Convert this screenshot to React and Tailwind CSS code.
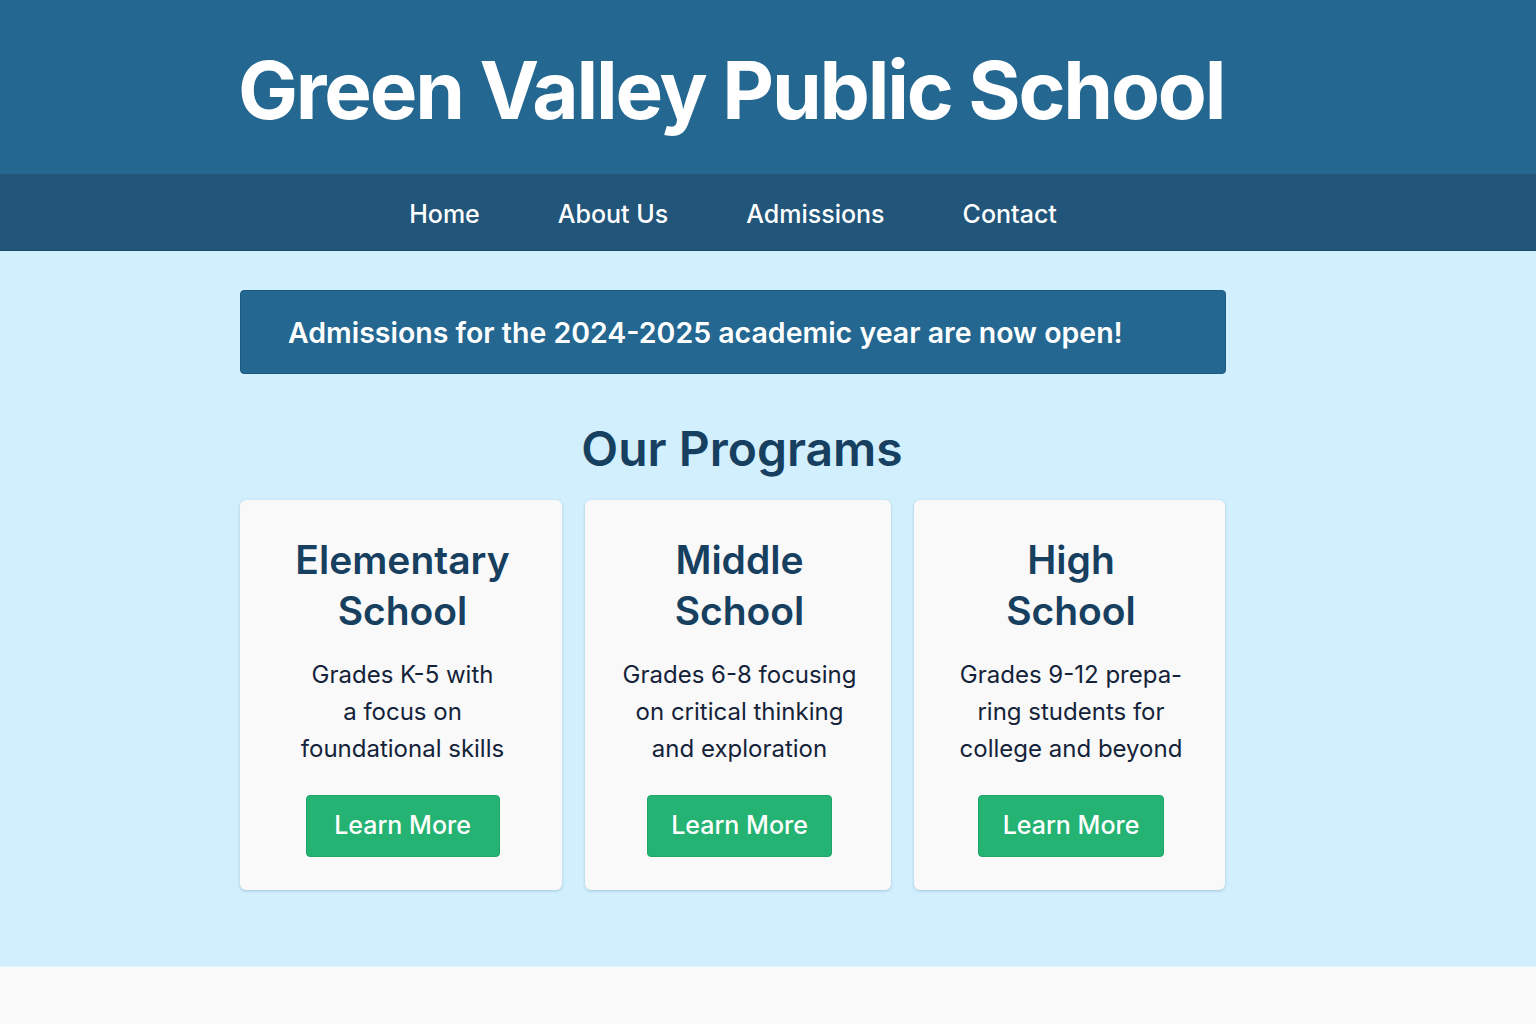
const programs = [
  {
    title: ["Elementary", "School"],
    lines: ["Grades K-5 with", "a focus on", "foundational skills"],
    width: "w-[322px]",
    button: "w-[194px]",
  },
  {
    title: ["Middle", "School"],
    lines: ["Grades 6-8 focusing", "on critical thinking", "and exploration"],
    width: "w-[306px]",
    button: "w-[185px]",
  },
  {
    title: ["High", "School"],
    lines: ["Grades 9-12 prepa-", "ring students for", "college and beyond"],
    width: "w-[311px]",
    button: "w-[186px]",
  },
];

function ProgramCard({ program }) {
  return (
    <div
      className={`${program.width} flex flex-col items-center rounded-md bg-[#f9f9f9] pt-[34px] pb-[33px] pl-[3px] shadow-[0_1px_3px_rgba(30,80,120,0.25)]`}
    >
      <h3 className="text-center text-[39px] font-semibold leading-[51px] text-[#173f5f]">
        {program.title[0]}
        <br />
        {program.title[1]}
      </h3>
      <p className="mt-[20px] text-center text-[24px] leading-[37px] text-[#14233a]">
        {program.lines.map((line, i) => (
          <span key={i}>
            {line}
            {i < program.lines.length - 1 && <br />}
          </span>
        ))}
      </p>
      <button
        className={`${program.button} mt-[28px] h-[62px] rounded-[4px] border border-[#21a468] bg-[#25b373] text-[25px] font-medium text-white`}
      >
        Learn More
      </button>
    </div>
  );
}

export default function App() {
  return (
    <div className="flex min-h-[1024px] flex-col font-['Inter',sans-serif]">
      <header className="h-[174px] bg-[#246791]">
        <div className="ml-[238px] w-[1000px] pt-[42px]">
          <h1 className="whitespace-nowrap text-[80px] font-bold leading-[96px] tracking-[-2.2px] text-white">
            Green Valley Public School
          </h1>
        </div>
      </header>
      <nav className="h-[77px] bg-[#21557a] border-b border-[#1b4a6b]">
        <ul className="ml-[240px] flex h-full w-[986px] items-center justify-center gap-[78px] pt-[5px] text-[25px] font-medium text-white">
          <li>Home</li>
          <li>About Us</li>
          <li>Admissions</li>
          <li>Contact</li>
        </ul>
      </nav>
      <main className="h-[715px] bg-[#d1effd]">
        <div className="ml-[240px] w-[986px] pt-[39px]">
          <div className="flex h-[84px] items-center rounded-[4px] border border-[#1d5a82] bg-[#246791] px-[47px] pt-[3px]">
            <p className="text-[28.5px] font-semibold text-white">
              Admissions for the 2024-2025 academic year are now open!
            </p>
          </div>
          <h2 className="mt-[42px] pl-[18px] text-center text-[48px] font-semibold leading-[66px] text-[#173f5f]">
            Our Programs
          </h2>
          <div className="mt-[18px] flex gap-[23px]">
            {programs.map((p) => (
              <ProgramCard key={p.title[0]} program={p} />
            ))}
          </div>
        </div>
      </main>
      <footer className="flex-1 bg-[#f9f9f9] border-t border-[#e4f3fa]" />
    </div>
  );
}
